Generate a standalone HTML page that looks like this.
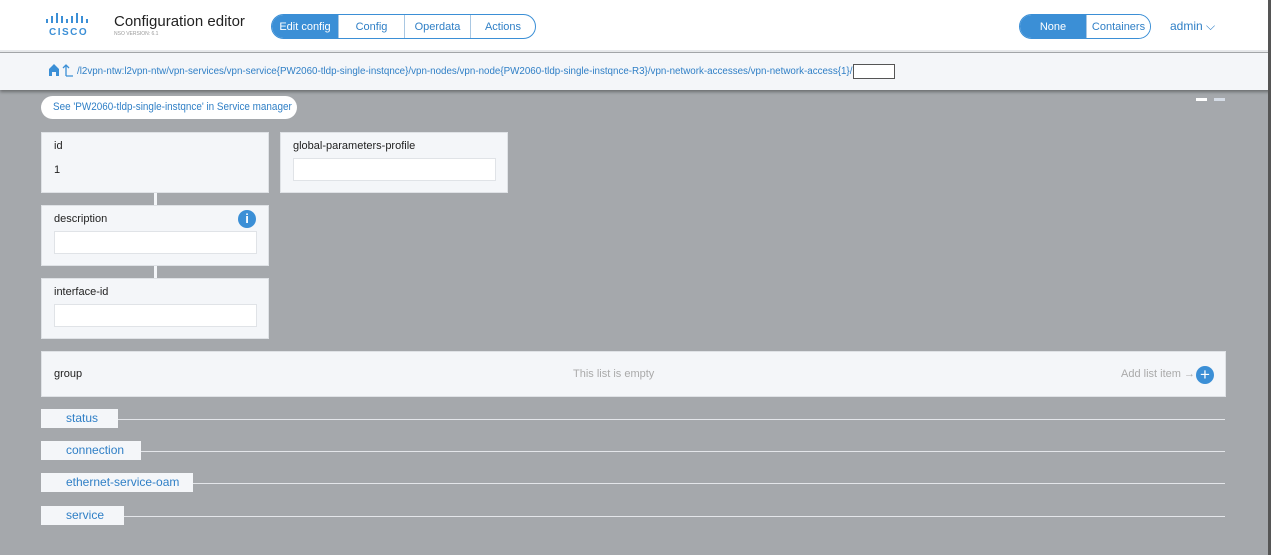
<!DOCTYPE html>
<html><head><meta charset="utf-8"><style>
*{box-sizing:border-box;margin:0;padding:0}
body{width:1271px;height:555px;overflow:hidden;font-family:"Liberation Sans",sans-serif;background:#a5a8ac;position:relative}
.a{position:absolute}
.hdr{left:0;top:0;width:1271px;height:52px;background:#fff;border-bottom:2px solid #e6e8eb}
.bc{left:0;top:53px;width:1271px;height:37px;background:#f4f6f9;box-shadow:0 2px 3px rgba(0,0,0,.35)}
.seg{display:flex;border:1px solid #3b8fd6;border-radius:13px;overflow:hidden;height:25px;font-size:11px;color:#2f7fc6}
.seg div{display:flex;align-items:center;justify-content:center;border-left:1px solid #a9c7e2;white-space:nowrap}
.seg div:first-child{border-left:none;background:#3b8fd6;color:#fff}
.box{background:#f4f6f9;border:1px solid #dfe2e6}
.lbl{font-size:11px;color:#222}
.inp{position:absolute;background:#fff;border:1px solid #e0e3e7;height:23px}
.tab{background:#f4f6f9;font-size:12px;color:#2f7fc6;height:19px;line-height:19px;padding-left:25px}
.ln{height:1px;background:#e4e6ea}
</style></head><body>
<div class="a hdr"></div>
<svg class="a" style="left:45px;top:13px" width="46" height="14" viewBox="0 0 46 14" fill="#3b8fd6">
<rect x="1" y="6" width="2" height="4"/><rect x="6" y="3" width="2" height="7"/><rect x="11" y="0" width="2" height="10"/><rect x="16" y="3" width="2" height="7"/><rect x="21" y="6" width="2" height="4"/><rect x="26" y="3" width="2" height="7"/><rect x="31" y="0" width="2" height="10"/><rect x="36" y="3" width="2" height="7"/><rect x="41" y="6" width="2" height="4"/></svg>
<div class="a" style="left:49px;top:27px;font-size:10px;font-weight:bold;color:#3b8fd6;letter-spacing:1.5px">CISCO</div>
<div class="a" style="left:114px;top:13px;font-size:15px;color:#222">Configuration editor</div>
<div class="a" style="left:114px;top:31px;font-size:5px;color:#999">NSO VERSION: 6.1</div>
<div class="a seg" style="left:271px;top:14px;width:265px"><div style="width:66px">Edit config</div><div style="width:66px">Config</div><div style="width:66px">Operdata</div><div style="flex:1">Actions</div></div>
<div class="a seg" style="left:1019px;top:14px;width:132px"><div style="width:66px">None</div><div style="flex:1;background:#fff">Containers</div></div>
<div class="a" style="left:1170px;top:19px;font-size:12px;color:#2f7fc6">admin ⌵</div>
<div class="a bc"></div>
<svg class="a" style="left:48px;top:63px" width="28" height="14" viewBox="0 0 28 14"><path d="M1 6L6 1L11 6V13H8V9H4V13H1Z" fill="#3b8fd6"/><path d="M18 13V2M15 5L18 2L21 5M18 13H25" stroke="#3b8fd6" stroke-width="1.3" fill="none"/></svg>
<div class="a" style="left:77px;top:66px;font-size:10px;color:#2f7fc6;white-space:nowrap;transform:scaleX(0.979);transform-origin:0 0">/l2vpn-ntw:l2vpn-ntw/vpn-services/vpn-service{PW2060-tldp-single-instqnce}/vpn-nodes/vpn-node{PW2060-tldp-single-instqnce-R3}/vpn-network-accesses/vpn-network-access{1}/</div>
<div class="a" style="left:853px;top:64px;width:42px;height:15px;background:#fff;border:1px solid #555"></div>
<div class="a" style="left:41px;top:96px;width:256px;height:23px;background:#fff;border-radius:12px"></div>
<div class="a" style="left:53px;top:101px;font-size:11px;color:#2f7fc6;white-space:nowrap;transform:scaleX(0.9);transform-origin:0 0">See 'PW2060-tldp-single-instqnce' in Service manager</div>
<div class="a" style="left:1196px;top:98px;width:11px;height:3px;background:#fff"></div>
<div class="a" style="left:1214px;top:98px;width:11px;height:3px;background:#d5dce6"></div>
<div class="a" style="left:154px;top:192px;width:3px;height:14px;background:#f4f6f9"></div>
<div class="a" style="left:154px;top:265px;width:3px;height:14px;background:#f4f6f9"></div>
<div class="a box" style="left:41px;top:132px;width:228px;height:61px"><div class="a lbl" style="left:12px;top:7px">id</div><div class="a lbl" style="left:12px;top:31px">1</div></div>
<div class="a box" style="left:280px;top:132px;width:228px;height:61px"><div class="a lbl" style="left:12px;top:7px">global-parameters-profile</div><div class="inp" style="left:12px;top:25px;width:203px"></div></div>
<div class="a box" style="left:41px;top:205px;width:228px;height:61px"><div class="a lbl" style="left:12px;top:7px">description</div><div class="a" style="left:196px;top:4px;width:18px;height:18px;border-radius:50%;background:#3b8fd6;color:#fff;font-size:13px;font-weight:bold;text-align:center;line-height:18px">i</div><div class="inp" style="left:12px;top:25px;width:203px"></div></div>
<div class="a box" style="left:41px;top:278px;width:228px;height:61px"><div class="a lbl" style="left:12px;top:7px">interface-id</div><div class="inp" style="left:12px;top:25px;width:203px"></div></div>
<div class="a box" style="left:41px;top:351px;width:1185px;height:46px"><div class="a lbl" style="left:12px;top:16px">group</div><div class="a" style="left:531px;top:16px;font-size:11px;color:#aaa">This list is empty</div><div class="a" style="left:1079px;top:16px;font-size:11px;color:#aaa">Add list item →</div><div class="a" style="left:1154px;top:14px;width:18px;height:18px;border-radius:50%;background:#3b8fd6;color:#fff;font-size:17px;text-align:center;line-height:18px">+</div></div>
<div class="a ln" style="left:118px;top:419px;width:1107px"></div>
<div class="a tab" style="left:41px;top:409px;width:77px">status</div>
<div class="a ln" style="left:141px;top:451px;width:1084px"></div>
<div class="a tab" style="left:41px;top:441px;width:100px">connection</div>
<div class="a ln" style="left:193px;top:483px;width:1032px"></div>
<div class="a tab" style="left:41px;top:473px;width:152px">ethernet-service-oam</div>
<div class="a ln" style="left:124px;top:516px;width:1101px"></div>
<div class="a tab" style="left:41px;top:506px;width:83px">service</div>
<div class="a" style="left:1268px;top:0;width:3px;height:555px;background:#555"></div>
</body></html>
